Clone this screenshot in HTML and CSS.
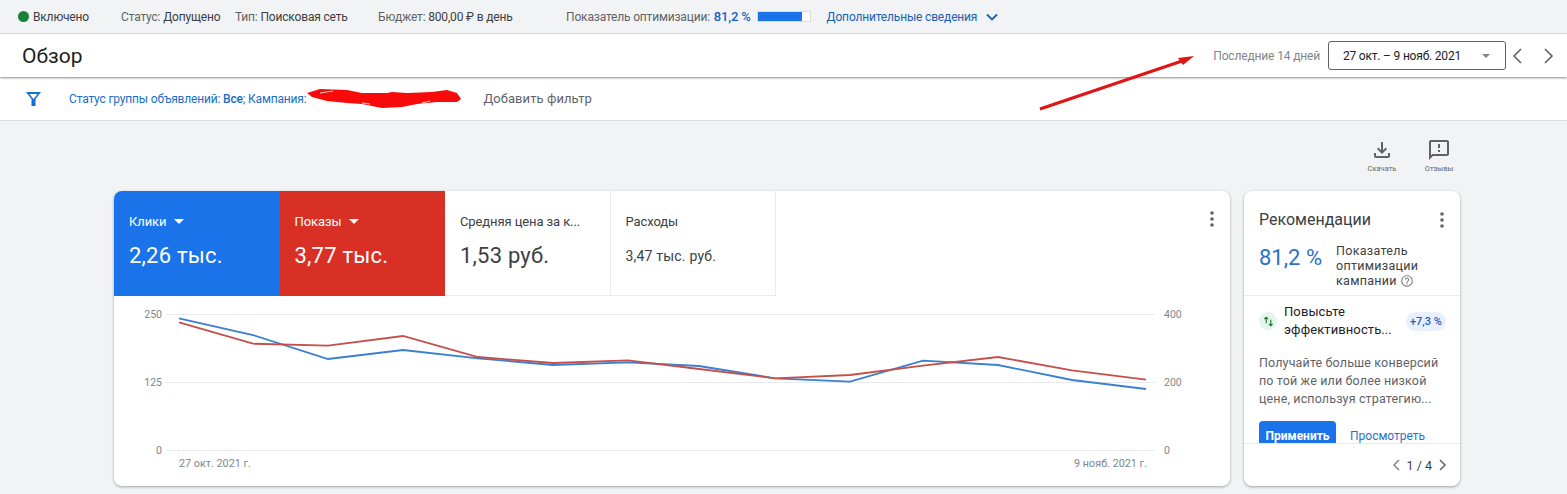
FILE: index.html
```html
<!DOCTYPE html>
<html lang="ru">
<head>
    <meta charset="UTF-8">
    <meta name="viewport" content="width=device-width, initial-scale=1.0">
    <title>Обзор</title>
    <link rel="stylesheet" href="styles.css">
</head>
<body>
    <div class="status-bar">
        <span class="status-dot"></span>
        <span class="status-item status-on">Включено</span>
        <span class="status-item status-state"><i>Статус:</i> Допущено</span>
        <span class="status-item status-type"><i>Тип:</i> Поисковая сеть</span>
        <span class="status-item status-budget"><i>Бюджет:</i> 800,00 ₽ в день</span>
        <span class="status-item status-score"><i>Показатель оптимизации:</i> <b>81,2 %</b></span>
        <span class="score-bar"><span class="score-fill"></span></span>
        <a class="status-more" href="#">Дополнительные сведения</a>
        <svg class="status-chevron" viewBox="0 0 12 8" width="12" height="8"><path d="M1 1.500l5 5 5-5" fill="none" stroke="#1a5fb4" stroke-width="1.800"/></svg>
    </div>

    <header class="page-header">
        <h1>Обзор</h1>
        <div class="date-tools">
            <span class="date-label">Последние 14 дней</span>
            <div class="date-box">
                <span>27 окт. – 9 нояб. 2021</span>
                <span class="caret caret-gray"></span>
            </div>
            <svg class="date-arrow" viewBox="0 0 12 18" width="12" height="18"><path d="M10 2L3 9l7 7" fill="none" stroke="#5f6368" stroke-width="1.600"/></svg>
            <svg class="date-arrow date-next" viewBox="0 0 12 18" width="12" height="18"><path d="M2 2l7 7-7 7" fill="none" stroke="#5f6368" stroke-width="1.600"/></svg>
        </div>
    </header>

    <div class="filter-bar">
        <svg class="filter-icon" viewBox="0 0 15 14" width="15" height="14"><path fill-rule="evenodd" d="M0 0h15L9.500 7v7h-4V7zM3.500 2l4 5 4-5z" fill="#1a6dd0"/></svg>
        <span class="filter-text">Статус группы объявлений: <b>Все</b>; Кампания:</span>
        <!-- закрашенное название кампании -->
        <svg class="filter-scribble" viewBox="0 0 154 20" width="154" height="20">
            <path d="M0 4l13-4 27 1 15 3 25 0 5-1 15 1 25-1 15-2 10 3 4 6-4 3-20 0-20 2-15 3-20 1-20-4-15-1-20-2-15-4z" fill="#f60a0a"/>
            <path d="M13 4l13-2M55 14l8 1M115 14l8-2" stroke="#fff" stroke-width="1" opacity="0.8" fill="none"/>
        </svg>
        <a class="filter-add" href="#">Добавить фильтр</a>
    </div>

    <main class="content">
        <div class="actions">
            <div class="action">
                <svg viewBox="0 0 24 24" width="24" height="24"><path d="M18 15v3H6v-3H4v3c0 1.100.9 2 2 2h12c1.100 0 2-.9 2-2v-3h-2zm-1-4l-1.410-1.410L13 12.170V4h-2v8.170L8.410 9.590 7 11l5 5 5-5z" fill="#5f6368"/></svg>
                <span>Скачать</span>
            </div>
            <div class="action">
                <svg viewBox="0 0 24 24" width="24" height="24"><path d="M20 2H4c-1.100 0-1.990.9-1.990 2L2 22l4-4h14c1.100 0 2-.9 2-2V4c0-1.100-.9-2-2-2zm0 14H5.170L4 17.170V4h16v12zM11 12h2v2h-2zm0-6h2v4h-2z" fill="#5f6368"/></svg>
                <span>Отзывы</span>
            </div>
        </div>

        <div class="cards">
            <section class="card chart-card">
                <div class="tabs">
                    <div class="tab tab-blue">
                        <div class="tab-name">Клики <span class="caret"></span></div>
                        <div class="tab-value">2,26 тыс.</div>
                    </div>
                    <div class="tab tab-red">
                        <div class="tab-name">Показы <span class="caret"></span></div>
                        <div class="tab-value">3,77 тыс.</div>
                    </div>
                    <div class="tab">
                        <div class="tab-name">Средняя цена за к...</div>
                        <div class="tab-value">1,53 руб.</div>
                    </div>
                    <div class="tab tab-last">
                        <div class="tab-name">Расходы</div>
                        <div class="tab-value tab-value-small">3,47 тыс. руб.</div>
                    </div>
                    <svg class="kebab chart-kebab" viewBox="0 0 4 16" width="4" height="16"><circle cx="2" cy="2" r="1.800"/><circle cx="2" cy="8" r="1.800"/><circle cx="2" cy="14" r="1.800"/></svg>
                </div>
                <svg class="chart" viewBox="114 296 1116 190" width="1116" height="190">
                    <g class="grid">
                        <line x1="167" y1="314.500" x2="1155" y2="314.500"/>
                        <line x1="167" y1="382.500" x2="1155" y2="382.500"/>
                        <line x1="167" y1="450.500" x2="1155" y2="450.500"/>
                        <line class="grid-tick" x1="178.500" y1="451" x2="178.500" y2="468"/>
                    </g>
                    <g class="axis">
                        <text x="162" y="318" text-anchor="end">250</text>
                        <text x="162" y="386" text-anchor="end">125</text>
                        <text x="162" y="454" text-anchor="end">0</text>
                        <text x="1164" y="318">400</text>
                        <text x="1164" y="386">200</text>
                        <text x="1164" y="454">0</text>
                        <text class="axis-date" x="179" y="467">27 окт. 2021 г.</text>
                        <text class="axis-date" x="1147" y="467" text-anchor="end">9 нояб. 2021 г.</text>
                    </g>
                    <polyline class="line-blue" points="179,318.300 253,335 328,359 403,350 478,358.300 553,365 628,362.300 699,366 775,378.300 850,381.700 923,360.700 998,365 1072,380 1146,389"/>
                    <polyline class="line-red" points="179,322.300 253,343.700 328,345.700 403,336 478,357 553,363 628,360.300 699,369 775,378.300 850,375 923,365.700 998,357 1072,370.300 1146,379.700"/>
                </svg>
            </section>

            <aside class="card rec-card">
                <div class="rec-head">
                    <h2>Рекомендации</h2>
                    <svg class="kebab" viewBox="0 0 4 16" width="4" height="16"><circle cx="2" cy="2" r="1.800"/><circle cx="2" cy="8" r="1.800"/><circle cx="2" cy="14" r="1.800"/></svg>
                </div>
                <div class="rec-score">
                    <span class="rec-percent">81,2 %</span>
                    <span class="rec-score-text">Показатель оптимизации кампании
                        <svg class="help-icon" viewBox="0 0 24 24" width="14" height="14"><path d="M11 18h2v-2h-2v2zm1-16C6.480 2 2 6.480 2 12s4.480 10 10 10 10-4.480 10-10S17.520 2 12 2zm0 18c-4.410 0-8-3.590-8-8s3.590-8 8-8 8 3.590 8 8-3.590 8-8 8zm0-14c-2.210 0-4 1.790-4 4h2c0-1.100.9-2 2-2s2 .9 2 2c0 2-3 1.750-3 5h2c0-2.250 3-2.500 3-5 0-2.210-1.790-4-4-4z" fill="#80868b"/></svg>
                    </span>
                </div>
                <div class="rec-body">
                    <div class="rec-row">
                        <span class="rec-badge">
                            <svg viewBox="0 0 12 12" width="11" height="11"><path d="M3.500 8V1.500M1.500 3.500l2-2 2 2" fill="none" stroke="#137333" stroke-width="1.200"/><path d="M8.500 4v6.500M6.500 8.500l2 2 2-2" fill="none" stroke="#137333" stroke-width="1.200"/></svg>
                        </span>
                        <span class="rec-title">Повысьте эффективность...</span>
                        <span class="rec-pill">+7,3 %</span>
                    </div>
                    <p class="rec-text">Получайте больше конверсий по той же или более низкой цене, используя стратегию...</p>
                    <div class="rec-buttons">
                        <a class="btn-apply" href="#">Применить</a>
                        <a class="btn-view" href="#">Просмотреть</a>
                    </div>
                </div>
                <div class="rec-pager">
                    <svg viewBox="0 0 8 12" width="8" height="12"><path d="M7 1L2 6l5 5" fill="none" stroke="#80868b" stroke-width="1.500"/></svg>
                    <span>1 / 4</span>
                    <svg viewBox="0 0 8 12" width="8" height="12"><path d="M1 1l5 5-5 5" fill="none" stroke="#5f6368" stroke-width="1.500"/></svg>
                </div>
            </aside>
        </div>
    </main>

    <!-- стрелка поверх страницы -->
    <svg class="red-arrow" viewBox="0 0 165 62" width="165" height="62"><path d="M3 59L148 10" stroke="#e01414" stroke-width="3" fill="none"/><path d="M157 6l-16 2 5 7z" fill="#e01414"/></svg>
</body>
</html>
```

FILE: styles.css
```css
* {
    box-sizing: border-box;
}
html, body {
    height: 100%;
    overflow: hidden;
}
body {
    margin: 0;
    padding: 0;
    background-color: #f1f3f4;
    color: #3c4043;
    font-family: Roboto, "Liberation Sans", sans-serif;
    font-size: 12px;
    position: relative;
}
a {
    text-decoration: none;
}

/* верхняя строка статуса */
.status-bar {
    display: flex;
    align-items: center;
    height: 34px;
    padding-left: 18px;
    background-color: #f1f3f4;
    border-bottom: 1px solid #dadce0;
    color: #3c4043;
    letter-spacing: -0.17px;
    white-space: nowrap;
}
.status-dot {
    width: 11px;
    height: 11px;
    border-radius: 50%;
    background-color: #188038;
}
.status-item i {
    font-style: normal;
    color: #5f6368;
}
.status-on {
    margin-left: 4px;
    width: 88px;
}
.status-state {
    width: 114px;
}
.status-type {
    width: 143px;
}
.status-budget {
    width: 188px;
}
.status-score b {
    font-weight: 500;
    color: #1a5fc4;
    font-size: 13px;
    margin-left: 1px;
}
.score-bar {
    width: 54px;
    height: 11px;
    margin-left: 6px;
    background-color: #fff;
    border: 1px solid #dadce0;
}
.score-fill {
    display: block;
    width: 44px;
    height: 100%;
    background-color: #1a73e8;
}
.status-more {
    margin-left: 16px;
    color: #1a5fb4;
}
.status-chevron {
    margin-left: 9px;
}

/* заголовок страницы */
.page-header {
    display: flex;
    align-items: center;
    justify-content: space-between;
    height: 43px;
    padding: 0 12px 0 22px;
    background-color: #fff;
    box-shadow: 0 1px 2px rgba(60, 64, 67, 0.6);
    position: relative;
}
.page-header h1 {
    margin: 0;
    font-size: 21px;
    font-weight: 400;
    color: #202124;
}
.date-tools {
    display: flex;
    align-items: center;
}
.date-label {
    color: #80868b;
    margin-right: 8px;
    letter-spacing: -0.15px;
}
.date-box {
    display: flex;
    align-items: center;
    justify-content: space-between;
    width: 178px;
    height: 29px;
    padding: 0 14px;
    border: 1px solid #5f6368;
    border-radius: 3px;
    color: #202124;
    letter-spacing: -0.2px;
}
.date-arrow {
    margin-left: 5px;
}
.date-next {
    margin-left: 20px;
}
.caret {
    display: inline-block;
    width: 0;
    height: 0;
    margin-left: 4px;
    vertical-align: 2px;
    border-left: 5px solid transparent;
    border-right: 5px solid transparent;
    border-top: 5px solid #fff;
}
.caret-gray {
    border-left-width: 4px;
    border-right-width: 4px;
    border-top: 4px solid #80868b;
    margin-right: 1px;
}

/* строка фильтров */
.filter-bar {
    display: flex;
    align-items: center;
    height: 44px;
    padding-left: 26px;
    background-color: #fff;
    border-bottom: 1px solid #dadce0;
}
.filter-text {
    margin-left: 28px;
    color: #1a6dc4;
    letter-spacing: -0.17px;
    white-space: nowrap;
}
.filter-text b {
    font-weight: 500;
}
.filter-scribble {
    margin-left: 1px;
}
.filter-add {
    margin-left: 22px;
    color: #5f6368;
    font-size: 13px;
    letter-spacing: 0.06px;
}

/* значки над карточками */
.actions {
    display: flex;
    justify-content: flex-end;
    gap: 25px;
    height: 70px;
    padding: 17px 112px 0 0;
}
.action {
    display: flex;
    flex-direction: column;
    align-items: center;
    width: 32px;
    font-size: 7.500px;
    color: #5f6368;
    white-space: nowrap;
}
.action span {
    margin-top: 2px;
}

/* карточки */
.cards {
    display: flex;
    gap: 14px;
    padding: 0 107px 0 114px;
}
.card {
    height: 295px;
    background-color: #fff;
    border-radius: 8px;
    box-shadow: 0 1px 3px rgba(60, 64, 67, 0.45);
    overflow: hidden;
}
.chart-card {
    flex: 1;
}
.tabs {
    display: flex;
    height: 105px;
    position: relative;
}
.tab {
    width: 165.500px;
    padding: 23px 15px 0;
    border-right: 1px solid #e8eaed;
    border-bottom: 1px solid #e8eaed;
    white-space: nowrap;
}
.tab-name {
    font-size: 13px;
    letter-spacing: -0.1px;
    line-height: 16px;
    color: #3c4043;
}
.tab-value {
    margin-top: 12px;
    font-size: 22px;
    letter-spacing: 0.2px;
    line-height: 28px;
    color: #3c4043;
}
.tab-value-small {
    font-size: 14px;
}
.tab-blue {
    background-color: #1a73e8;
    border: 0;
}
.tab-red {
    background-color: #d93025;
    border: 0;
}
.tab-blue .tab-name, .tab-blue .tab-value,
.tab-red .tab-name, .tab-red .tab-value {
    color: #fff;
}
.kebab {
    fill: #5f6368;
}
.chart-kebab {
    position: absolute;
    top: 20px;
    right: 16px;
}
.chart {
    display: block;
}
.grid line {
    stroke: #e8eaed;
    stroke-width: 1;
}
.grid .grid-tick {
    stroke: #f1f3f4;
}
.axis text {
    fill: #80868b;
    font-size: 10.500px;
}
.axis text.axis-date {
    font-size: 10.800px;
}
.line-blue, .line-red {
    fill: none;
    stroke-width: 1.800;
}
.line-blue {
    stroke: #3a7fd0;
}
.line-red {
    stroke: #c5504a;
}

/* рекомендации */
.rec-card {
    display: flex;
    flex-direction: column;
    width: 216px;
}
.rec-head {
    display: flex;
    align-items: center;
    justify-content: space-between;
    padding: 18px 16px 0 15px;
}
.rec-head h2 {
    margin: 0;
    font-size: 16px;
    font-weight: 400;
    line-height: 22px;
    color: #3c4043;
}
.rec-score {
    display: flex;
    height: 65px;
    padding: 12px 15px 0;
    border-bottom: 1px solid #e8eaed;
}
.rec-percent {
    width: 77px;
    padding-top: 1px;
    font-size: 22px;
    line-height: 28px;
    color: #2a6fc9;
}
.rec-score-text {
    flex: 1;
    font-size: 12.500px;
    letter-spacing: 0.3px;
    line-height: 15px;
    color: #3c4043;
}
.help-icon {
    vertical-align: -3px;
}
.rec-body {
    flex: 1;
    overflow: hidden;
    padding: 7px 14px 0 15px;
    border-bottom: 1px solid #e8eaed;
}
.rec-row {
    display: flex;
    align-items: center;
}
.rec-badge {
    display: flex;
    align-items: center;
    justify-content: center;
    flex: none;
    width: 18px;
    height: 18px;
    margin-right: 7px;
    border-radius: 50%;
    background-color: #e6f4ea;
}
.rec-title {
    width: 122px;
    font-size: 13px;
    letter-spacing: 0.1px;
    line-height: 18px;
    color: #202124;
}
.rec-pill {
    flex: none;
    padding: 3px 4px;
    border-radius: 10px;
    background-color: #e8f0fe;
    color: #2a5fb4;
    font-size: 11px;
    font-weight: 500;
}
.rec-text {
    margin: 15px 0 13px;
    font-size: 12.500px;
    letter-spacing: 0.14px;
    line-height: 18px;
    color: #5f6368;
}
.rec-buttons {
    display: flex;
    align-items: center;
}
.btn-apply {
    display: block;
    width: 77px;
    height: 32px;
    border-radius: 4px;
    background-color: #1a73e8;
    color: #fff;
    font-weight: 700;
    text-align: center;
    line-height: 30px;
}
.btn-view {
    margin-left: 14px;
    margin-bottom: 2px;
    color: #2a6fc9;
}
.rec-pager {
    display: flex;
    align-items: center;
    justify-content: flex-end;
    gap: 7px;
    height: 42px;
    padding-right: 13px;
    font-size: 12.500px;
    color: #3c4043;
}

.red-arrow {
    position: absolute;
    left: 1037px;
    top: 50px;
}
```
